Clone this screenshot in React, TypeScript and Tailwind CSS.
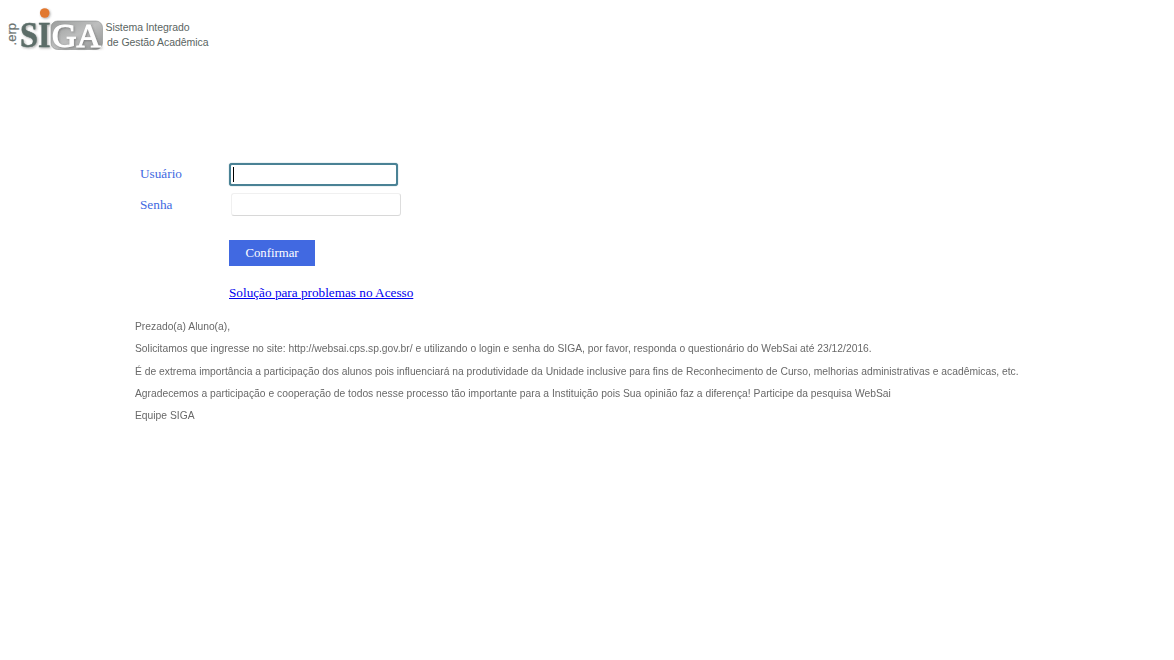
import React from 'react';

const notices = [
  'Prezado(a) Aluno(a),',
  'Solicitamos que ingresse no site: http://websai.cps.sp.gov.br/ e utilizando o login e senha do SIGA, por favor, responda o questionário do WebSai até 23/12/2016.',
  'É de extrema importância a participação dos alunos pois influenciará na produtividade da Unidade inclusive para fins de Reconhecimento de Curso, melhorias administrativas e acadêmicas, etc.',
  'Agradecemos a participação e cooperação de todos nesse processo tão importante para a Instituição pois Sua opinião faz a diferença! Participe da pesquisa WebSai',
  'Equipe SIGA',
];

function Logo() {
  return (
    <svg width="220" height="60" viewBox="0 0 220 60" role="img" aria-label="SIGA" className="block">
      <defs>
        <linearGradient id="plate" x1="0" y1="0" x2="1" y2="1">
          <stop offset="0" stopColor="#9c9e9d" />
          <stop offset="0.5" stopColor="#bdbebe" />
          <stop offset="1" stopColor="#929493" />
        </linearGradient>
        <filter id="shade" x="-20%" y="-20%" width="150%" height="150%">
          <feDropShadow dx="1" dy="1" stdDeviation="0.8" floodColor="#444" floodOpacity="0.45" />
        </filter>
      </defs>
      <text transform="translate(16 45.5) rotate(-90)" fontFamily="Liberation Sans, sans-serif" fontSize="13" fill="#6d7472" stroke="#6d7472" strokeWidth="0.2" textLength="22.5">.erp</text>
      <rect x="51" y="21" width="51.5" height="28.5" rx="6.5" fill="url(#plate)" stroke="#8c8e8d" strokeWidth="0.6" />
      <g filter="url(#shade)" fontFamily="Liberation Serif, serif" fontWeight="bold">
        <circle cx="44.7" cy="13" r="4.8" fill="#e1772d" />
        <text x="20" y="47" fontSize="35" fill="#5b6d68" stroke="#5b6d68" strokeWidth="0.5" textLength="30.5" lengthAdjust="spacingAndGlyphs">SI</text>
        <text x="52" y="46.8" fontSize="34" fontWeight="normal" fill="#fff" stroke="#fff" strokeWidth="1.1" textLength="49" lengthAdjust="spacingAndGlyphs">GA</text>
      </g>
      <g fontFamily="Liberation Sans, sans-serif" fontSize="10.5" fill="#5a6562">
        <text x="105.5" y="31" textLength="84">Sistema Integrado</text>
        <text x="107" y="45.5" textLength="101.5">de Gestão Acadêmica</text>
      </g>
    </svg>
  );
}

export default function App() {
  return (
    <main className="min-h-screen overflow-hidden bg-white font-['Liberation_Serif',serif]">
      <Logo />
      <form className="pt-[102px]" onSubmit={(e) => e.preventDefault()}>
        <div className="flex h-[26px] items-start pl-[140px] text-[13.25px] text-[#4169e1]">
          <label htmlFor="user" className="w-[89px] pt-[2px] leading-5">Usuário</label>
          <div className="mt-px flex h-[23px] w-[169px] items-center rounded-[3px] border-2 border-[#4a8295] bg-white pl-[2px] shadow-[0_0_1px_#4a8295]">
            <span className="h-[15px] w-px bg-black" />
            <input id="user" className="min-w-0 flex-1 bg-transparent text-black outline-none" />
          </div>
        </div>
        <div className="mt-[5px] flex h-[24px] items-start pl-[140px] text-[13.25px] text-[#4169e1]">
          <label htmlFor="password" className="w-[91px] pt-[2px] leading-5">Senha</label>
          <input id="password" type="password" className="h-[23px] w-[170px] rounded-[3px] border border-[#f0f0f0] border-r-[#ddd] border-b-[#d8d8d8] bg-white px-1 text-black outline-none" />
        </div>
        <div className="flex flex-col items-start pt-[23px] pl-[229px]">
          <button type="submit" className="h-[26px] w-[86px] bg-[#4169e1] text-[12.75px] leading-[26px] text-white">Confirmar</button>
          <a href="#" className="mt-[17px] text-[13.22px] leading-5 whitespace-nowrap text-[#0000ee] underline">Solução para problemas no Acesso</a>
        </div>
      </form>
      <section className="ml-[135px] w-[1020px] origin-left scale-x-[0.8815] pt-[12px] font-['Liberation_Sans',sans-serif] text-[11.7px] leading-[22.35px] whitespace-nowrap text-[#696969]">
        {notices.map((n) => <p key={n}>{n}</p>)}
      </section>
    </main>
  );
}
